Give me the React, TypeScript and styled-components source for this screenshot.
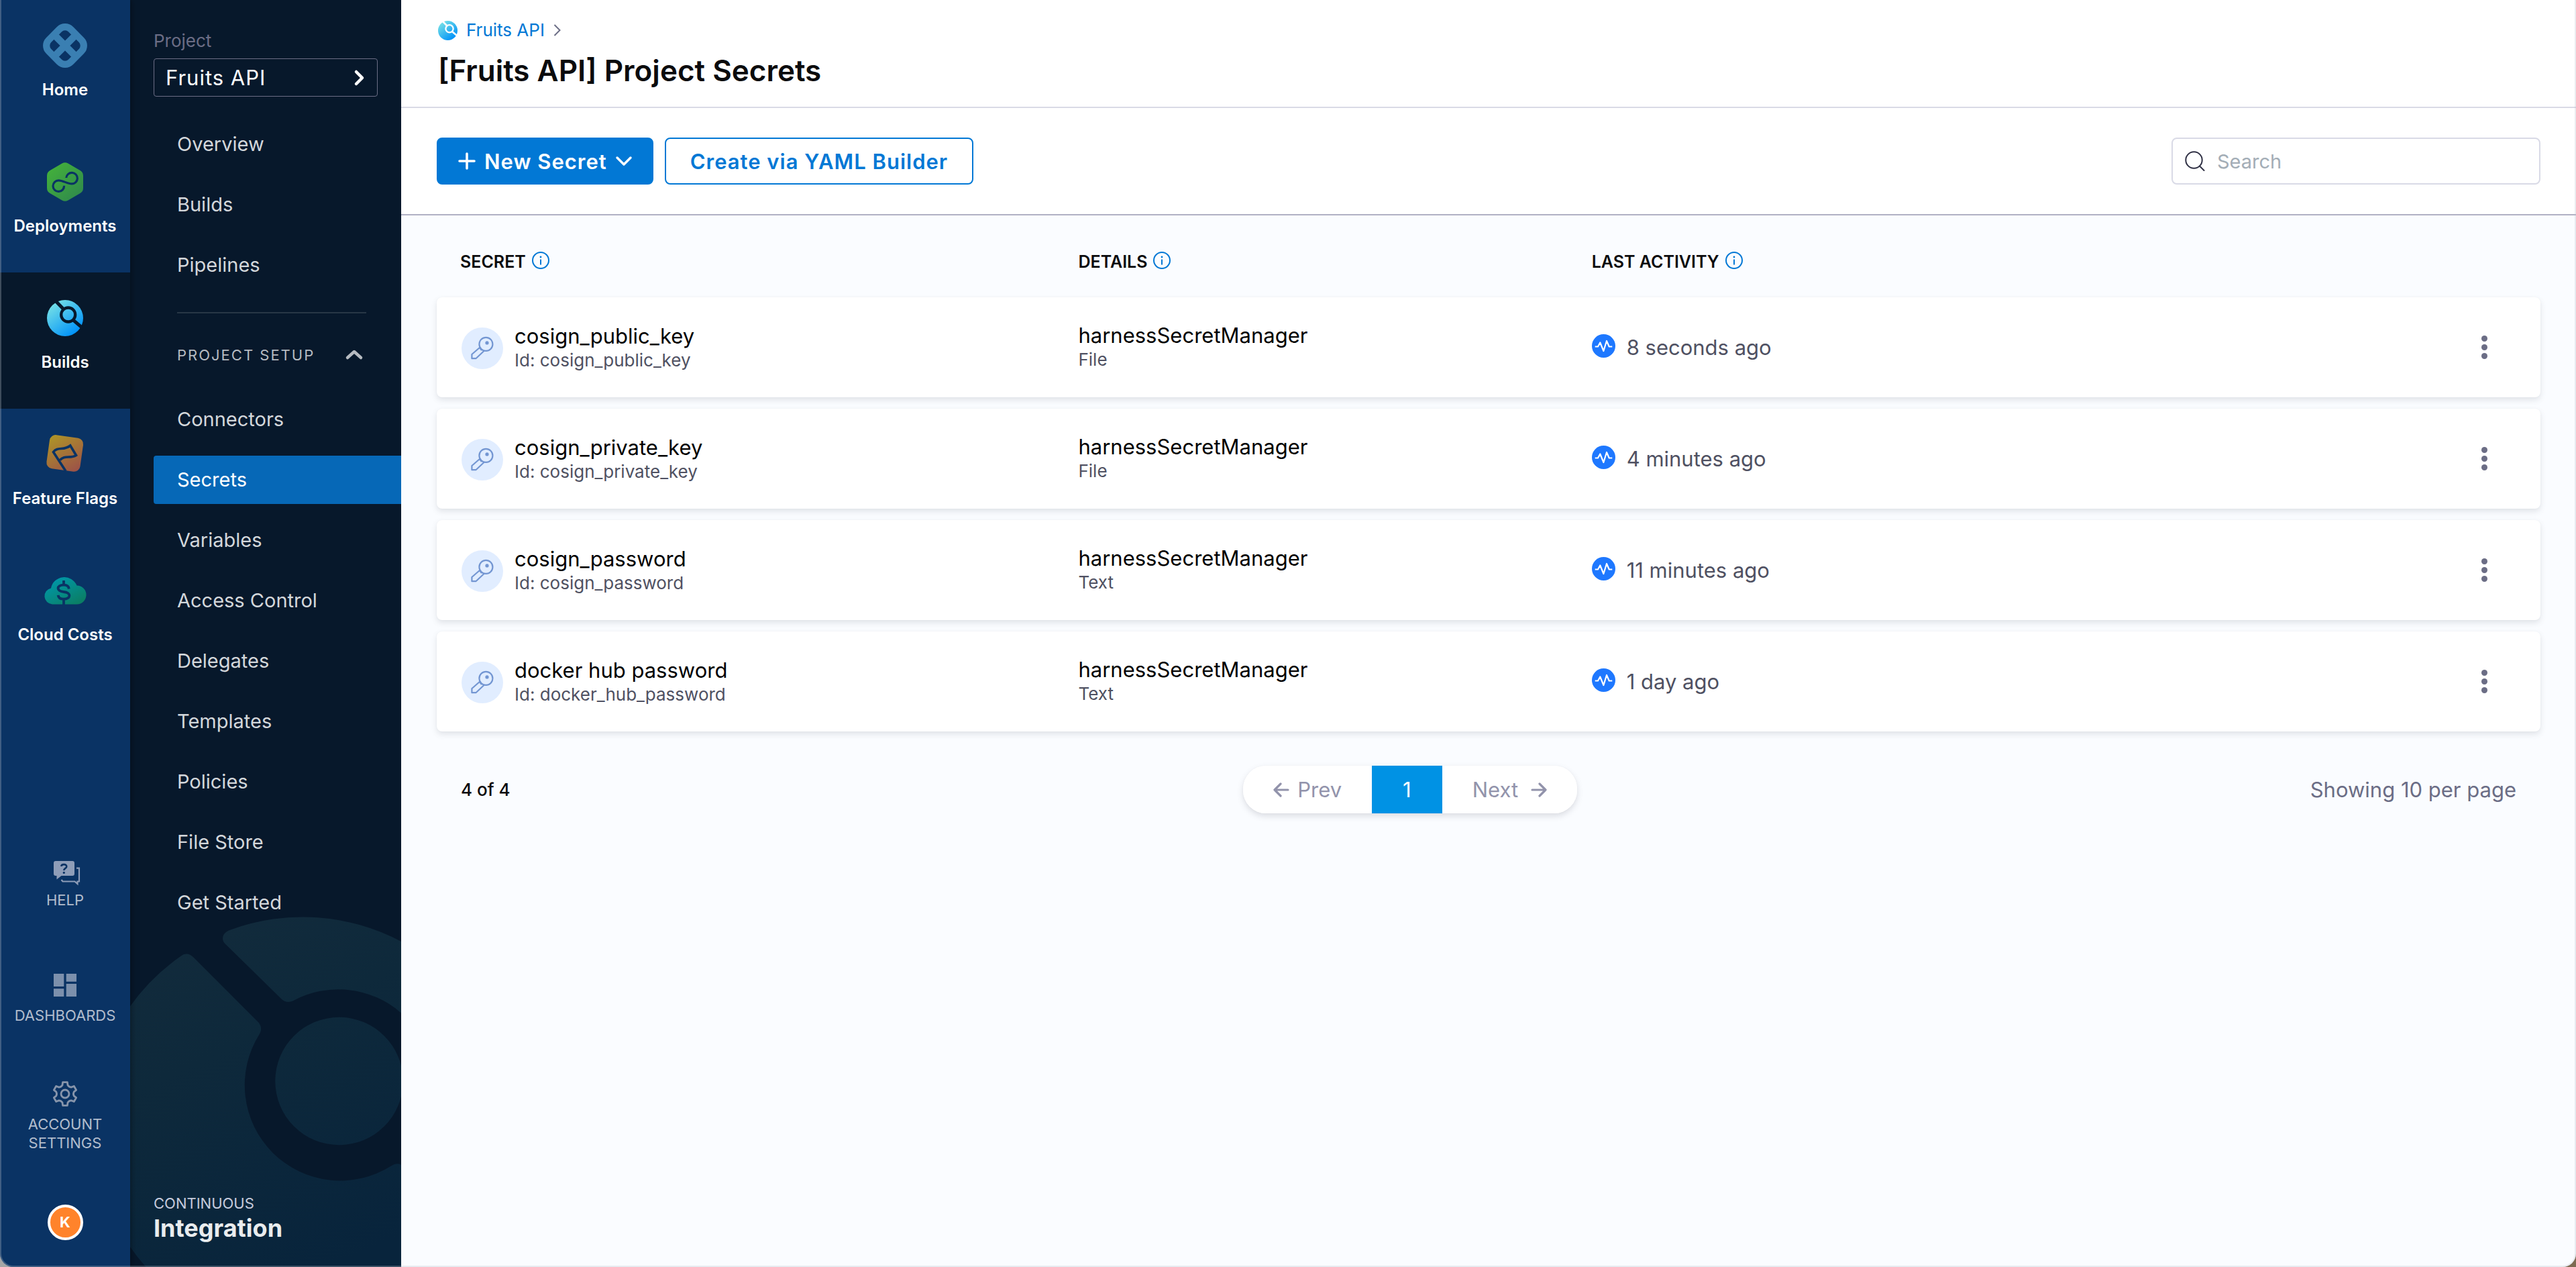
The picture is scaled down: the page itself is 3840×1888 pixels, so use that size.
import React from "react";
import styled, { createGlobalStyle } from "styled-components";

const color = {
  navy: "#0a3364",
  ink: "#07182b",
  blue: "#0278d5",
  black: "#0b0b0d",
  grey: "#4f5162",
  greyMid: "#6b6d85",
  greySoft: "#9293ab",
  line: "#d9dae6",
  canvas: "#fafcff",
};

const GlobalStyle = createGlobalStyle`
  *, *::before, *::after { box-sizing: border-box; }
  body {
    margin: 0;
    background: linear-gradient(90deg, #a6a6a6, #7d6a52);
    font-family: Inter, "Liberation Sans", sans-serif;
    color: ${color.black};
  }
  button, input { font: inherit; }
  button { cursor: pointer; }
  a { text-decoration: none; }
  svg { display: block; flex: none; }
`;

/* ---------- Icons ---------- */

const HomeIcon = () => (
  <svg width="66" height="66" viewBox="0 0 66 66" fill="none" stroke="#3a7fb2" aria-hidden="true">
    <g transform="rotate(45 33 33)">
      <rect x="9.8" y="9.8" width="46.4" height="46.4" rx="12" strokeWidth="10.2" />
      <path d="M33 10V56M10 33H56" strokeWidth="10.4" />
    </g>
  </svg>
);

const DeploymentsIcon = () => (
  <svg width="66" height="66" viewBox="-6 -4 66 66" fill="none" aria-hidden="true">
    <defs>
      <linearGradient id="deployFill" x1="0" y1="0" x2="54" y2="58" gradientUnits="userSpaceOnUse">
        <stop offset="0.15" stopColor="#42ae3c" />
        <stop offset="0.95" stopColor="#2f884d" />
      </linearGradient>
    </defs>
    <path
      d="M22.5 1.6a9 9 0 0 1 9 0L49.5 12a9 9 0 0 1 4.5 7.8v18.4a9 9 0 0 1-4.5 7.8L31.5 56.4a9 9 0 0 1-9 0L4.5 46A9 9 0 0 1 0 38.2V19.8A9 9 0 0 1 4.5 12Z"
      fill="url(#deployFill)"
    />
    <path
      d="M28.8 23a8.3 8.3 0 1 1 8.2 8.9C30.5 32 24 26.8 17.3 26.8A8.3 8.3 0 1 0 25.6 34.8"
      stroke={color.navy}
      strokeWidth="3.2"
    />
  </svg>
);

const BuildsIcon = ({ size, cut, id }: { size: number; cut: string; id: string }) => (
  <svg width={size} height={size} viewBox="0 0 54 54" fill="none" aria-hidden="true">
    <defs>
      <linearGradient id={id} x1="8" y1="6" x2="42" y2="50" gradientUnits="userSpaceOnUse">
        <stop offset="0" stopColor="#73dfe7" />
        <stop offset="1" stopColor="#0092f9" />
      </linearGradient>
    </defs>
    <circle cx="27" cy="27" r="27" fill={`url(#${id})`} />
    <circle cx="31.7" cy="22" r="10.5" stroke={cut} strokeWidth="4.3" />
    <path d="M12 0.5L24.5 13.5M39 29.8L54 42.5" stroke={cut} strokeWidth="5" />
  </svg>
);

const FlagsIcon = () => (
  <svg width="66" height="66" viewBox="0 2 66 66" fill="none" aria-hidden="true">
    <defs>
      <linearGradient id="flagFill" x1="10" y1="6" x2="54" y2="60" gradientUnits="userSpaceOnUse">
        <stop offset="0.1" stopColor="#ad9029" />
        <stop offset="1" stopColor="#9c5049" />
      </linearGradient>
    </defs>
    <rect x="7.5" y="8.2" width="50.5" height="50.5" rx="9" transform="rotate(8 32.7 33.4)" fill="url(#flagFill)" />
    <path
      d="M34 60L15.5 31.5C22 23 31 30 40.8 22L49.5 36.5C41 42 32 35.5 25.5 43.5"
      stroke={color.navy}
      strokeWidth="3.6"
      strokeLinejoin="miter"
    />
  </svg>
);

const CloudIcon = () => (
  <svg width="66" height="66" viewBox="0 2 66 66" fill="none" aria-hidden="true">
    <defs>
      <linearGradient id="cloudFill" x1="20" y1="10" x2="46" y2="58" gradientUnits="userSpaceOnUse">
        <stop offset="0.1" stopColor="#0097a7" />
        <stop offset="1" stopColor="#0b7e64" />
      </linearGradient>
    </defs>
    <path
      d="M14 55.5H50.5A13.6 13.6 0 0 0 50.5 27.5A20.2 20.2 0 0 0 12 31.4A12.2 12.2 0 0 0 14 55.5Z"
      fill="url(#cloudFill)"
    />
    <path
      d="M38.8 32.5C38.5 28.5 35.5 26.7 31 26.7C20 26.7 19.5 36 31 37C42.5 38 42 47.7 31 47.7C26 47.7 23 46 22.7 41.8M31 20V27M31 48V56"
      stroke={color.navy}
      strokeWidth="3.8"
    />
  </svg>
);

const HelpIcon = () => (
  <svg width="42" height="42" viewBox="0 0 42 42" fill="none" overflow="visible" aria-hidden="true">
    <path d="M7 8H32A3 3 0 0 1 35 11V27A3 3 0 0 1 32 30H15.5L8.5 35.5V30H7A3 3 0 0 1 4 27V11A3 3 0 0 1 7 8Z" fill="#8e9db8" />
    <path d="M38 18.7H42V38.5H39.5V42L35.5 38.5H17.5L15.5 36" stroke="#8e9db8" strokeWidth="2.2" />
    <path d="M15.4 16C15.4 12.3 23.3 12 23.3 16.2C23.3 19 19.3 18.8 19.3 22" stroke={color.navy} strokeWidth="2.6" />
    <circle cx="19.3" cy="25.4" r="1.6" fill={color.navy} />
  </svg>
);

const DashboardsIcon = () => (
  <svg width="42" height="42" viewBox="0 0 42 42" fill="#7c90ac" aria-hidden="true">
    <path d="M4 4H19.3V23H4ZM4 26.3H19.3V38H4ZM22.7 4H38V15.7H22.7ZM22.7 19H38V38H22.7Z" />
  </svg>
);

const gearOutline = Array.from({ length: 6 }, (_, k) => {
  const point = (deg: number, radius: number) => {
    const a = ((k * 60 + deg - 90) * Math.PI) / 180;
    return `${(21 + radius * Math.cos(a)).toFixed(1)} ${(21 + radius * Math.sin(a)).toFixed(1)}`;
  };
  return `${k ? "L" : "M"}${point(-11, 17.6)}L${point(11, 17.6)}L${point(17, 13.6)}Q${point(30, 11.6)} ${point(43, 13.6)}`;
}).join("");

const GearIcon = () => (
  <svg width="42" height="42" viewBox="0 0 42 42" fill="none" stroke="#8795ab" strokeWidth="2.8" strokeLinejoin="round" aria-hidden="true">
    <path d={`${gearOutline}Z`} />
    <circle cx="21" cy="21" r="6" />
  </svg>
);

const KeyIcon = () => (
  <svg width="62" height="62" viewBox="0 0 62 62" fill="none" stroke="#7396d2" strokeWidth="2.2" aria-hidden="true">
    <circle cx="31" cy="31" r="31" fill="#e1edff" stroke="none" />
    <circle cx="36.4" cy="24.9" r="10" />
    <circle cx="38" cy="22.9" r="2.6" fill="#7396d2" stroke="none" />
    <path d="M27.5 29.5L15.4 40V46.2H21.4L34 34.5M27 30L30 34.2" strokeLinejoin="round" />
  </svg>
);

const PulseIcon = () => (
  <svg width="35" height="35" viewBox="0 0 35 35" fill="none" aria-hidden="true">
    <circle cx="17.5" cy="17.5" r="17.5" fill="#1e78ff" />
    <path d="M4.7 18.5H9L12.3 12.5L17.4 25L22 10L25.7 18.5H30.3" stroke="#fff" strokeWidth="2.2" strokeLinejoin="round" />
  </svg>
);

const InfoIcon = () => (
  <svg width="26" height="26" viewBox="0 0 26 26" fill="none" stroke={color.blue} strokeWidth="2" aria-hidden="true">
    <circle cx="13" cy="13" r="12" />
    <path d="M13 11.5V19.5" />
    <circle cx="13" cy="8" r="1.4" fill={color.blue} stroke="none" />
  </svg>
);

type Direction = "up" | "down" | "right";
const chevrons: Record<Direction, string> = {
  up: "M2 11L12 2L22 11",
  down: "M2 2L12 12L22 2",
  right: "M2 2L11 11L2 20",
};
const Chevron = ({ to, stroke, weight }: { to: Direction; stroke: string; weight: number }) => {
  const size = to === "right" ? { w: 13, h: 22 } : { w: 24, h: 14 };
  return (
    <svg width={size.w} height={size.h} viewBox={`0 0 ${size.w} ${size.h}`} fill="none" stroke={stroke} strokeWidth={weight} strokeLinecap="round" strokeLinejoin="round" overflow="visible" aria-hidden="true">
      <path d={chevrons[to]} />
    </svg>
  );
};

const CrumbChevron = () => (
  <svg width="12" height="18" viewBox="0 0 12 18" fill="none" stroke={color.greyMid} strokeWidth="2" aria-hidden="true">
    <path d="M1.5 1L9.5 9L1.5 17" />
  </svg>
);

const PlusIcon = () => (
  <svg width="26" height="26" viewBox="0 0 26 26" fill="none" stroke="#fff" strokeWidth="3.6" strokeLinecap="round" aria-hidden="true">
    <path d="M13 2V24M2 13H24" />
  </svg>
);

const SearchIcon = () => (
  <svg width="30" height="30" viewBox="0 0 30 30" fill="none" stroke="#2f3044" strokeWidth="2" strokeLinecap="round" aria-hidden="true">
    <circle cx="13.5" cy="13.5" r="12.2" />
    <path d="M22 22.5L28.5 29" />
  </svg>
);

const ArrowIcon = ({ flip }: { flip?: boolean }) => (
  <svg width="24" height="24" viewBox="0 0 24 24" fill="none" stroke={color.greySoft} strokeWidth="3.2" strokeLinecap="round" strokeLinejoin="round" aria-hidden="true">
    <path d={flip ? "M2 12H22M13 3L22 12L13 21" : "M22 12H2M11 3L2 12L11 21"} />
  </svg>
);

const DotsIcon = () => (
  <svg width="9" height="35" viewBox="0 0 9 35" fill={color.greyMid} aria-hidden="true">
    <circle cx="4.5" cy="4.5" r="4.5" />
    <circle cx="4.5" cy="17.5" r="4.5" />
    <circle cx="4.5" cy="30.5" r="4.5" />
  </svg>
);

/* ---------- Shell ---------- */

const Shell = styled.div`
  position: relative;
  display: flex;
  min-height: 100vh;
  overflow: clip;
  border-radius: 0 0 20px 20px;
  background: ${color.canvas};
  &::after {
    content: "";
    position: absolute;
    inset: 0;
    z-index: 3;
    pointer-events: none;
    border: solid rgba(190, 195, 205, 0.3);
    border-width: 0 2px 2px;
    border-radius: inherit;
  }
`;

const PrimaryNav = styled.nav`
  z-index: 2;
  flex: none;
  display: flex;
  flex-direction: column;
  justify-content: space-between;
  width: 194px;
  background: ${color.navy};
  box-shadow: 0 0 10px rgba(0, 0, 0, 0.5);
`;

const ModuleLink = styled.a<{ $active?: boolean }>`
  display: flex;
  flex-direction: column;
  align-items: center;
  gap: 18px;
  height: 203px;
  padding-top: 35px;
  background: ${(p) => (p.$active ? color.ink : "transparent")};
  color: #fff;
  font-size: 24px;
  font-weight: 600;
  line-height: 30px;
  white-space: nowrap;
`;

const IconBox = styled.span`
  display: flex;
  align-items: center;
  justify-content: center;
  height: 66px;
`;

const Utilities = styled.div`
  display: flex;
  flex-direction: column;
  align-items: center;
  gap: 78px;
  padding-bottom: 40px;
`;

const UtilityLink = styled.a<{ $after?: number }>`
  display: flex;
  flex-direction: column;
  align-items: center;
  gap: 10px;
  width: 154px;
  margin-bottom: ${(p) => p.$after ?? 0}px;
  color: #b2bdcd;
  font-size: 22px;
  line-height: 28px;
  text-align: center;
`;

const Avatar = styled.button`
  width: 53px;
  height: 53px;
  padding: 0;
  border: 4px solid #fff;
  border-radius: 50%;
  background: #ff832b;
  color: #fff;
  font-size: 22px;
  font-weight: 700;
  line-height: 45px;
`;

const SidePanel = styled.aside`
  position: relative;
  flex: none;
  display: flex;
  flex-direction: column;
  width: 404px;
  padding: 45px 0 36px 35px;
  background: ${color.ink};
`;

const PanelArt = styled.svg`
  position: absolute;
  left: 0;
  bottom: 0;
`;

const PanelLabel = styled.label`
  color: ${color.greyMid};
  font-size: 26px;
  line-height: 32px;
`;

const ProjectPicker = styled.button`
  display: flex;
  align-items: center;
  justify-content: space-between;
  height: 57px;
  margin: 10px 35px 35px 0;
  padding: 0 20px 0 17px;
  border: 1px solid ${color.greyMid};
  border-radius: 4px;
  background: transparent;
  color: #fff;
  font-size: 31px;
  letter-spacing: 1px;
`;

const Menu = styled.ul`
  z-index: 1;
  display: flex;
  flex-direction: column;
  gap: 18px;
  margin: 0;
  padding: 0;
  list-style: none;
`;

const MenuLink = styled.a<{ $active?: boolean }>`
  display: block;
  padding-left: 35px;
  border-radius: 4px 0 0 4px;
  background: ${(p) => (p.$active ? "#0668b7" : "transparent")};
  color: ${(p) => (p.$active ? "#fff" : "#d3d7db")};
  font-size: 29px;
  line-height: 72px;
`;

const Divider = styled.hr`
  width: 282px;
  height: 2px;
  margin: 34px 0 47px 35px;
  border: 0;
  background: #283746;
`;

const SectionToggle = styled.button`
  display: flex;
  align-items: center;
  justify-content: space-between;
  margin: 0 58px 45px 35px;
  padding: 0;
  border: 0;
  background: transparent;
  color: #b6bbc1;
  font-size: 22px;
  line-height: 30px;
  letter-spacing: 2px;
`;

const PanelFooter = styled.div`
  z-index: 1;
  margin-top: auto;
`;

const FooterSmall = styled.div`
  color: #c6cbdd;
  font-size: 22px;
  line-height: 30px;
`;

const FooterBig = styled.div`
  color: #e9ecee;
  font-size: 36px;
  font-weight: 700;
  line-height: 44px;
`;

/* ---------- Main ---------- */

const Main = styled.main`
  flex: 1;
  min-width: 0;
`;

const PageHeader = styled.header`
  padding: 30px 55px 27px;
  border-bottom: 2px solid ${color.line};
  background: #fff;
`;

const Breadcrumb = styled.div`
  display: flex;
  align-items: center;
  gap: 13px;
  line-height: 30px;
  margin-bottom: 18px;
`;

const Crumb = styled.a`
  color: ${color.blue};
  font-size: 26px;
`;

const Title = styled.h1`
  margin: 0;
  font-size: 44px;
  font-weight: 600;
  line-height: 54px;
`;

const Toolbar = styled.div`
  display: flex;
  align-items: center;
  gap: 17px;
  padding: 44px 53px;
  border-bottom: 2px solid #b0b1c4;
  background: #fff;
`;

const ActionButton = styled.button<{ $primary?: boolean }>`
  display: flex;
  align-items: center;
  height: 70px;
  padding: 0 ${(p) => (p.$primary ? "30px" : "36px")};
  border: 2px solid ${color.blue};
  border-radius: 8px;
  background: ${(p) => (p.$primary ? color.blue : "#fff")};
  color: ${(p) => (p.$primary ? "#fff" : color.blue)};
  font-size: 31px;
  font-weight: 600;
  letter-spacing: 1px;
  gap: 13px;
  white-space: nowrap;
`;

const SearchBox = styled.label`
  display: flex;
  align-items: center;
  gap: 18px;
  width: 550px;
  height: 70px;
  margin-left: auto;
  padding: 0 18px;
  border: 2px solid ${color.line};
  border-radius: 8px;
`;

const SearchInput = styled.input`
  flex: 1;
  min-width: 0;
  padding: 0;
  border: 0;
  outline: 0;
  background: transparent;
  font-size: 29px;
  &::placeholder { color: #a3adb6; }
`;

const Content = styled.section`
  padding: 54px 53px;
`;

const SecretTable = styled.table`
  display: block;
`;

const TableHead = styled.thead`
  display: block;
  margin-bottom: 38px;
`;

const TableBody = styled.tbody`
  display: flex;
  flex-direction: column;
  gap: 17px;
`;

const Row = styled.tr`
  display: grid;
  grid-template-columns: 30.5% 24.4% 1fr 168px;
  align-items: center;
`;

const CardRow = styled(Row)`
  height: 149px;
  border-radius: 8px;
  background: #fff;
  box-shadow: 0 0 2px rgba(40, 41, 61, 0.04), 0 4px 8px rgba(96, 97, 112, 0.16);
`;

const HeadCell = styled.th<{ $first?: boolean }>`
  display: flex;
  gap: 9px;
  padding: 0 0 0 ${(p) => (p.$first ? "35px" : "0")};
  font-size: 25px;
  font-weight: 600;
  line-height: 30px;
`;

const SecretCell = styled.td`
  display: flex;
  align-items: center;
  gap: 17px;
  padding: 2px 0 0 37px;
`;

const Cell = styled.td`
  padding: 0;
`;

const Primary = styled.div`
  font-size: 31px;
  line-height: 37px;
  color: #000;
`;

const Secondary = styled.div`
  font-size: 26px;
  line-height: 36px;
  color: ${color.grey};
`;

const Activity = styled.div`
  display: flex;
  align-items: center;
  gap: 17px;
  font-size: 31px;
  line-height: 36px;
  color: ${color.grey};
  svg { margin-bottom: 4px; }
`;

const MenuCell = styled.td`
  display: flex;
  justify-content: center;
  padding: 0;
`;

const MenuButton = styled.button`
  padding: 8px 20px;
  border: 0;
  background: transparent;
`;

const Footer = styled.div`
  display: flex;
  align-items: center;
  justify-content: space-between;
  margin-top: 51px;
  padding: 0 36px;
`;

const Count = styled.span`
  font-size: 26px;
  font-weight: 500;
`;

const Pager = styled.div`
  display: flex;
  height: 71px;
  overflow: hidden;
  border-radius: 34px;
  background: #fff;
  box-shadow: 0 0 2px rgba(40, 41, 61, 0.04), 0 4px 10px rgba(96, 97, 112, 0.2);
`;

const PagerButton = styled.button<{ $current?: boolean }>`
  display: flex;
  align-items: center;
  gap: 12px;
  padding: 0 ${(p) => (p.$current ? "46px" : "45px")};
  border: 0;
  background: ${(p) => (p.$current ? "#0092e4" : "#fff")};
  color: ${(p) => (p.$current ? "#fff" : color.greySoft)};
  font-size: 31px;
`;

const PagerNext = styled(PagerButton)`
  gap: 19px;
`;

const PageSize = styled.span`
  color: ${color.greyMid};
  font-size: 31px;
`;

const menuTop = ["Overview", "Builds", "Pipelines"];
const menuSetup = ["Connectors", "Secrets", "Variables", "Access Control", "Delegates", "Templates", "Policies", "File Store", "Get Started"];

const secrets = [
  { name: "cosign_public_key", id: "cosign_public_key", kind: "File", when: "8 seconds ago" },
  { name: "cosign_private_key", id: "cosign_private_key", kind: "File", when: "4 minutes ago" },
  { name: "cosign_password", id: "cosign_password", kind: "Text", when: "11 minutes ago" },
  { name: "docker hub password", id: "docker_hub_password", kind: "Text", when: "1 day ago" },
];

const modules = [
  { label: "Home", icon: <HomeIcon /> },
  { label: "Deployments", icon: <DeploymentsIcon /> },
  { label: "Builds", icon: <BuildsIcon size={54} cut={color.ink} id="buildsNav" />, active: true },
  { label: "Feature Flags", icon: <FlagsIcon /> },
  { label: "Cloud Costs", icon: <CloudIcon /> },
];

export default function App() {
  return (
    <>
      <GlobalStyle />
      <Shell>
        <PrimaryNav>
          <div>
            {modules.map((m) => (
              <ModuleLink key={m.label} href="#" $active={m.active}>
                <IconBox>{m.icon}</IconBox>
                {m.label}
              </ModuleLink>
            ))}
          </div>
          <Utilities>
            <UtilityLink href="#" $after={14}><HelpIcon />HELP</UtilityLink>
            <UtilityLink href="#" $after={4}><DashboardsIcon />DASHBOARDS</UtilityLink>
            <UtilityLink href="#"><GearIcon />ACCOUNT SETTINGS</UtilityLink>
            <Avatar>K</Avatar>
          </Utilities>
        </PrimaryNav>

        <SidePanel>
          <PanelArt width="404" height="522" viewBox="0 0 404 522" aria-hidden="true">
            <defs>
              <linearGradient id="artFill" x1="60" y1="20" x2="300" y2="522" gradientUnits="userSpaceOnUse">
                <stop offset="0" stopColor="#122b3c" />
                <stop offset="0.35" stopColor="#0e293b" />
                <stop offset="1" stopColor="#08243c" />
              </linearGradient>
            </defs>
            <g fill="url(#artFill)">
              <path d="M150 19.5A313 313 0 0 1 404 37V143.4A142.4 142.4 0 0 0 243 125.2C237 128 231 127.5 226 123L141.300 40C135 33.500 138 23 150 19.500Z" />
              <path d="M75.3 59A313 313 0 0 0 0 133.5V492A313 313 0 0 0 23.5 522H404V370C400 367 394 368 389 371.500A142.400 142.400 0 0 1 192.700 175C197 168 195 161 190.300 156.600L94.600 60.800C88 54.500 82 54 75.300 59Z" />
              <circle cx="311.5" cy="245" r="95.2" />
            </g>
          </PanelArt>
          <PanelLabel htmlFor="project">Project</PanelLabel>
          <ProjectPicker id="project">
            Fruits API
            <Chevron to="right" stroke="#fff" weight={4.5} />
          </ProjectPicker>
          <Menu>
            {menuTop.map((t) => (
              <li key={t}><MenuLink href="#">{t}</MenuLink></li>
            ))}
          </Menu>
          <Divider />
          <SectionToggle>
            PROJECT SETUP
            <Chevron to="up" stroke="#b6bbc1" weight={4.5} />
          </SectionToggle>
          <Menu>
            {menuSetup.map((t) => (
              <li key={t}><MenuLink href="#" $active={t === "Secrets"}>{t}</MenuLink></li>
            ))}
          </Menu>
          <PanelFooter>
            <FooterSmall>CONTINUOUS</FooterSmall>
            <FooterBig>Integration</FooterBig>
          </PanelFooter>
        </SidePanel>

        <Main>
          <PageHeader>
            <Breadcrumb>
              <BuildsIcon size={29} cut="#fff" id="buildsCrumb" />
              <Crumb href="#">Fruits API</Crumb>
              <CrumbChevron />
            </Breadcrumb>
            <Title>[Fruits API] Project Secrets</Title>
          </PageHeader>
          <Toolbar>
            <ActionButton $primary>
              <PlusIcon />
              New Secret
              <Chevron to="down" stroke="#fff" weight={3.5} />
            </ActionButton>
            <ActionButton>Create via YAML Builder</ActionButton>
            <SearchBox>
              <SearchIcon />
              <SearchInput type="search" placeholder="Search" aria-label="Search" />
            </SearchBox>
          </Toolbar>
          <Content>
            <SecretTable>
              <TableHead>
                <Row>
                  <HeadCell $first>SECRET <InfoIcon /></HeadCell>
                  <HeadCell>DETAILS <InfoIcon /></HeadCell>
                  <HeadCell>LAST ACTIVITY <InfoIcon /></HeadCell>
                </Row>
              </TableHead>
              <TableBody>
                {secrets.map((s) => (
                  <CardRow key={s.id}>
                    <SecretCell>
                      <KeyIcon />
                      <div>
                        <Primary>{s.name}</Primary>
                        <Secondary>Id: {s.id}</Secondary>
                      </div>
                    </SecretCell>
                    <Cell>
                      <Primary>harnessSecretManager</Primary>
                      <Secondary>{s.kind}</Secondary>
                    </Cell>
                    <Cell>
                      <Activity><PulseIcon />{s.when}</Activity>
                    </Cell>
                    <MenuCell>
                      <MenuButton aria-label={`Options for ${s.name}`}><DotsIcon /></MenuButton>
                    </MenuCell>
                  </CardRow>
                ))}
              </TableBody>
            </SecretTable>
            <Footer>
              <Count>4 of 4</Count>
              <Pager>
                <PagerButton><ArrowIcon />Prev</PagerButton>
                <PagerButton $current>1</PagerButton>
                <PagerNext>Next<ArrowIcon flip /></PagerNext>
              </Pager>
              <PageSize>Showing 10 per page</PageSize>
            </Footer>
          </Content>
        </Main>
      </Shell>
    </>
  );
}
